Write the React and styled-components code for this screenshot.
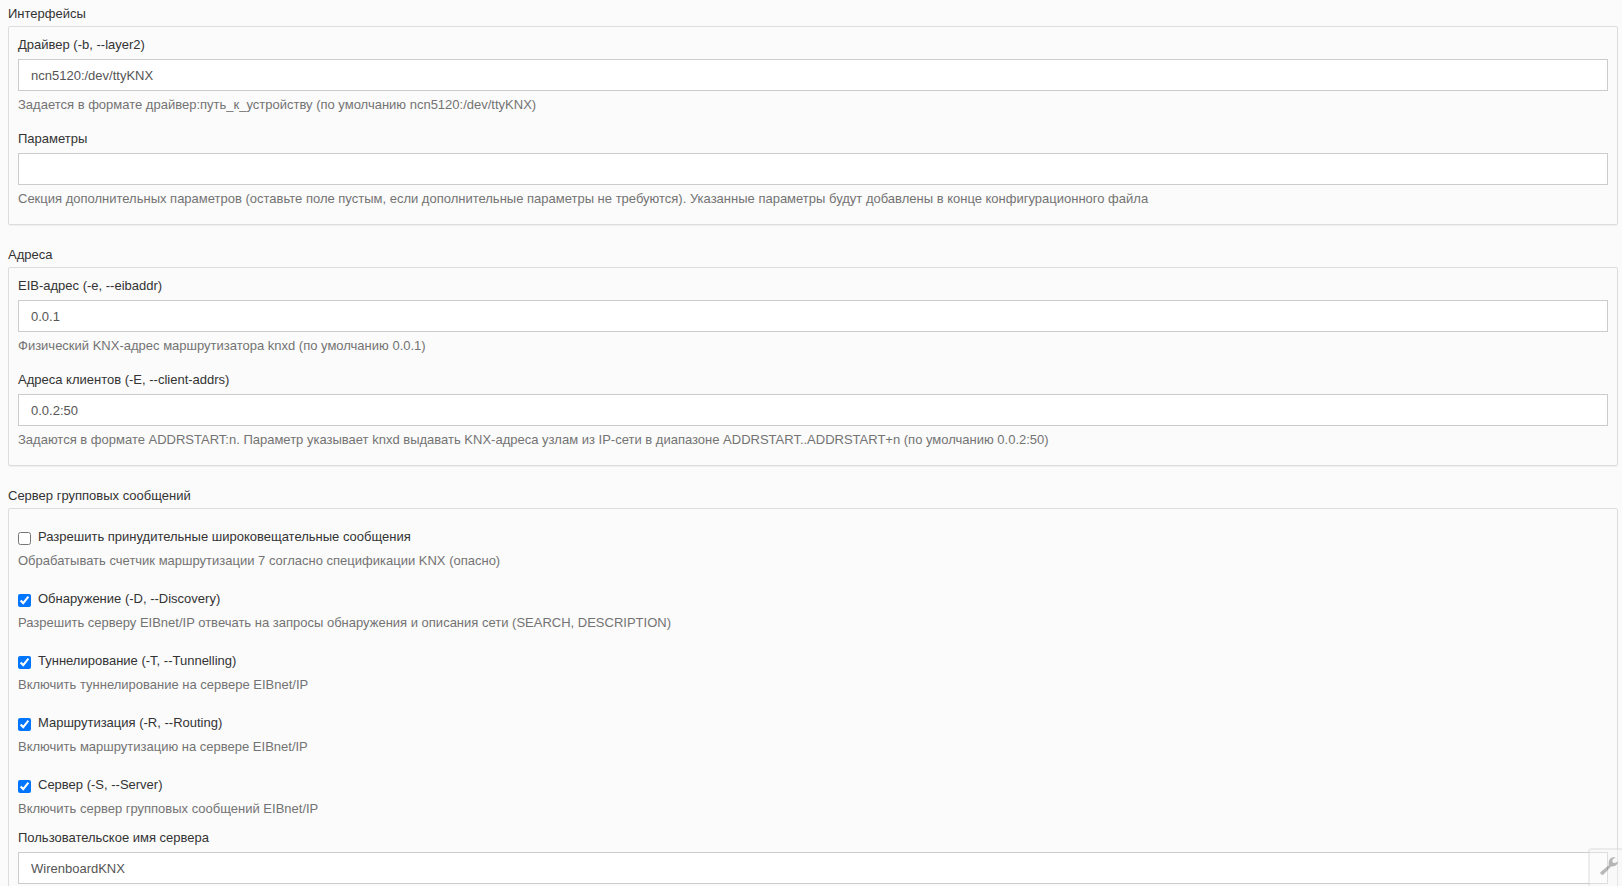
import { useId, useState } from 'react';
import styled, { createGlobalStyle } from 'styled-components';

const GlobalStyle = createGlobalStyle`
  * {
    box-sizing: border-box;
  }

  body {
    margin: 0;
    background-color: #fbfbfb;
    color: #333;
    font-family: 'Liberation Sans', Arial, sans-serif;
    font-size: 13px;
    line-height: 20px;
  }
`;

const Page = styled.main`
  display: flex;
  flex-direction: column;
  gap: 20px;
  padding: 4px 4px 0 8px;
`;

const Title = styled.h2`
  margin: 0 0 2px;
  font-size: 13px;
  font-weight: 400;
  line-height: 20px;
`;

const Panel = styled.div`
  padding: 8px 9px 15px;
  border: 1px solid #ddd;
  border-radius: 2px;
  box-shadow: 0 1px 1px rgba(0, 0, 0, 0.05);
`;

const Field = styled.div`
  & + & {
    margin-top: 14px;
  }
`;

const Label = styled.label`
  display: block;
  margin-bottom: 4px;
`;

const Input = styled.input`
  display: block;
  width: 100%;
  height: 32px;
  padding: 6px 12px;
  border: 1px solid #ccc;
  border-radius: 0;
  background-color: #fff;
  color: #555;
  font-family: inherit;
  font-size: 13px;
  line-height: 20px;

  &:focus {
    outline: none;
    border-color: #66afe9;
  }
`;

const Help = styled.p`
  margin: 4px 0 0;
  color: #737373;
`;

const CheckGroup = styled.div`
  display: flex;
  flex-direction: column;
  gap: 18px;
  padding-top: 10px;
  margin-bottom: 9px;
`;

const CheckLabel = styled.label`
  display: flex;
  align-items: center;
  gap: 7px;
`;

const Checkbox = styled.input`
  width: 13px;
  height: 13px;
  margin: 3px 0 0;
`;

const ToolButton = styled.button`
  position: fixed;
  right: 0;
  bottom: 0;
  display: flex;
  justify-content: flex-end;
  width: 34px;
  height: 38px;
  padding: 7px 4px;
  border: 2px solid rgba(0, 0, 0, 0.06);
  border-width: 2px 0 0 2px;
  border-radius: 4px 0 0 0;
  background-color: rgba(248, 248, 248, 0.4);
  color: rgba(0, 0, 0, 0.27);
  cursor: pointer;
`;

const TextField = ({ label, help, value }) => {
  const id = useId();
  const [text, setText] = useState(value);

  return (
    <Field>
      <Label htmlFor={id}>{label}</Label>
      <Input
        id={id}
        type="text"
        value={text}
        onChange={e => setText(e.target.value)}
      />
      {help && <Help>{help}</Help>}
    </Field>
  );
};

const CheckField = ({ label, help, checked = false }) => (
  <div>
    <CheckLabel>
      <Checkbox type="checkbox" defaultChecked={checked} />
      {label}
    </CheckLabel>
    <Help>{help}</Help>
  </div>
);

const WrenchIcon = () => (
  <svg width="18" height="18" viewBox="0 0 18 18" aria-hidden="true">
    <path
      fill="currentColor"
      d="M0.6 15 8.8 8.2C8.4 5.4 8.7 3.2 10.4 1.6 11.8 0.4 13.6 0 15.6 0.6L12.4 2.8 12.6 5.4 15 6 18 4.6C17.8 6.8 16.6 8.4 14.8 9 13.4 9.5 11.8 9.4 10.8 9.8L3.6 17.4C2.6 18.2 1.2 17.8 0.6 17 0.1 16.4 0.1 15.5 0.6 15Z"
    />
  </svg>
);

const App = () => {
  return (
    <>
      <GlobalStyle />
      <Page>
        <section>
          <Title>Интерфейсы</Title>
          <Panel>
            <TextField
              label="Драйвер (-b, --layer2)"
              value="ncn5120:/dev/ttyKNX"
              help="Задается в формате драйвер:путь_к_устройству (по умолчанию ncn5120:/dev/ttyKNX)"
            />
            <TextField
              label="Параметры"
              value=""
              help="Секция дополнительных параметров (оставьте поле пустым, если дополнительные параметры не требуются). Указанные параметры будут добавлены в конце конфигурационного файла"
            />
          </Panel>
        </section>
        <section>
          <Title>Адреса</Title>
          <Panel>
            <TextField
              label="EIB-адрес (-e, --eibaddr)"
              value="0.0.1"
              help="Физический KNX-адрес маршрутизатора knxd (по умолчанию 0.0.1)"
            />
            <TextField
              label="Адреса клиентов (-E, --client-addrs)"
              value="0.0.2:50"
              help="Задаются в формате ADDRSTART:n. Параметр указывает knxd выдавать KNX-адреса узлам из IP-сети в диапазоне ADDRSTART..ADDRSTART+n (по умолчанию 0.0.2:50)"
            />
          </Panel>
        </section>
        <section>
          <Title>Сервер групповых сообщений</Title>
          <Panel>
            <CheckGroup>
              <CheckField
                label="Разрешить принудительные широковещательные сообщения"
                help="Обрабатывать счетчик маршрутизации 7 согласно спецификации KNX (опасно)"
              />
              <CheckField
                checked
                label="Обнаружение (-D, --Discovery)"
                help="Разрешить серверу EIBnet/IP отвечать на запросы обнаружения и описания сети (SEARCH, DESCRIPTION)"
              />
              <CheckField
                checked
                label="Туннелирование (-T, --Tunnelling)"
                help="Включить туннелирование на сервере EIBnet/IP"
              />
              <CheckField
                checked
                label="Маршрутизация (-R, --Routing)"
                help="Включить маршрутизацию на сервере EIBnet/IP"
              />
              <CheckField
                checked
                label="Сервер (-S, --Server)"
                help="Включить сервер групповых сообщений EIBnet/IP"
              />
            </CheckGroup>
            <TextField
              label="Пользовательское имя сервера"
              value="WirenboardKNX"
            />
          </Panel>
        </section>
      </Page>
      <ToolButton type="button" aria-label="Настройки">
        <WrenchIcon />
      </ToolButton>
    </>
  );
};

export default App;
